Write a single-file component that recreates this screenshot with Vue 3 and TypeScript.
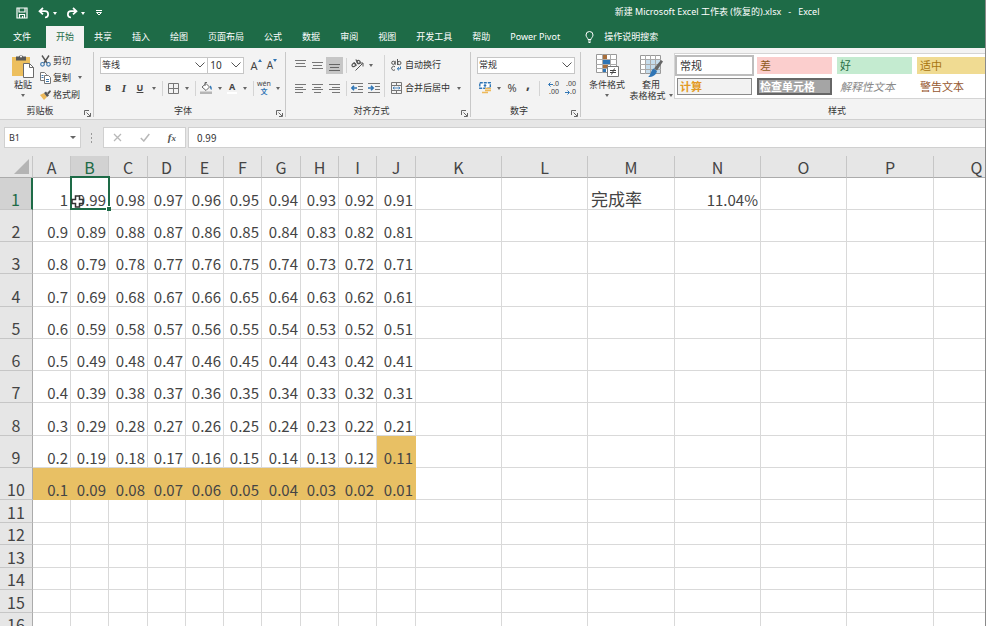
<script setup lang="ts">
import { computed, onBeforeUnmount, onMounted, ref } from 'vue'

interface Column { name: string; size: string }
interface Cell { text: string; kind: string; filled: boolean }

const tabs: string[] = ['共享', '插入', '绘图', '页面布局', '公式', '数据', '审阅', '视图', '开发工具', '帮助', 'Power Pivot']

const dataRows = 10
const dataColumns = 10
const view = ref({ width: window.innerWidth, height: window.innerHeight })

function measure(): void {
  view.value = { width: window.innerWidth, height: window.innerHeight }
}
onMounted(() => window.addEventListener('resize', measure))
onBeforeUnmount(() => window.removeEventListener('resize', measure))

// Only the rows and columns that fit in the window are rendered.
const columns = computed<Column[]>(() => {
  const wide = Math.max(1, Math.ceil((view.value.width - 416) / 86.4))
  return Array.from({ length: Math.min(26, dataColumns + wide) }, (_, i) => {
    const narrow = i < dataColumns
    const extra = narrow ? [2, 6, 9].includes(i) : i % 3 === 0
    return { name: String.fromCharCode(65 + i), size: (narrow ? 'narrow' : 'wide') + (extra ? ' extra' : '') }
  })
})

function cellAt(row: number, col: number, name: string): Cell {
  if (row < dataRows && col < dataColumns) {
    return {
      text: String((100 - row * 10 - col) / 100),
      kind: 'number',
      filled: row === 9 || (row === 8 && col === 9),
    }
  }
  if (row === 0 && name === 'M') return { text: '完成率', kind: 'label', filled: false }
  if (row === 0 && name === 'N') return { text: '11.04%', kind: 'number', filled: false }
  return { text: '', kind: '', filled: false }
}

const rows = computed<Cell[][]>(() => {
  const blank = Math.max(0, Math.ceil((view.value.height - 500) / 22.5))
  return Array.from({ length: dataRows + blank }, (_, r) => columns.value.map((c, i) => cellAt(r, i, c.name)))
})

const active = { row: 0, col: 1 }
const reference = ref('B1')
const formula = ref('0.99')
</script>

<template>
  <div class="app">
    <header class="titlebar">
      <div class="quick">
        <button class="q" aria-label="保存">
          <svg width="12" height="12" viewBox="0 0 12 12" fill="none" stroke="#fff" stroke-width="1.2"><path d="M1 1h10v10H1zM3 1v4h6V1M3.5 11V7.5h5V11M6.5 9v2" /></svg>
        </button>
        <button class="q undo" aria-label="撤消">
          <svg width="12" height="12" viewBox="0 0 12 12" fill="none" stroke="#fff" stroke-width="1.7"><path d="M5 1L1.5 4.2 5 7.4M2 4.2h5a3 3 0 0 1 0 6.3" /></svg>
        </button>
        <i class="caret light"></i>
        <button class="q redo" aria-label="恢复">
          <svg width="12" height="12" viewBox="0 0 12 12" fill="none" stroke="#fff" stroke-width="1.7"><path d="M7 1l3.5 3.2L7 7.4M10 4.2H5a3 3 0 0 0 0 6.3" /></svg>
        </button>
        <i class="caret light"></i>
        <button class="q more" aria-label="自定义">
          <svg width="8" height="6" viewBox="0 0 8 6" fill="none" stroke="#fff"><path d="M1 .5h6M1.5 2.5h5L4 5z" /></svg>
        </button>
      </div>
      <div class="title">新建 Microsoft Excel 工作表 (恢复的).xlsx&nbsp; &nbsp;-&nbsp; &nbsp;Excel</div>
    </header>

    <nav class="tabs">
      <button class="tab file">文件</button>
      <button class="tab current">开始</button>
      <button v-for="t in tabs" :key="t" class="tab">{{ t }}</button>
      <button class="tab tell">
        <svg width="9" height="12" viewBox="0 0 9 12" fill="none" stroke="#fff"><path d="M3 8.5C3 7 1 6 1 4a3.5 3.5 0 0 1 7 0C8 6 6 7 6 8.5zM3 10h3M3.5 11.5h2" /></svg>
        <span>操作说明搜索</span>
      </button>
    </nav>

    <section class="ribbon">
      <div class="group clipboard">
        <div class="body">
          <button class="big paste">
            <svg width="22" height="24" viewBox="0 0 22 24"><path d="M0 3h18v19H0z" fill="#edbf5d" /><path d="M4 2.5h3a2.200 2.200 0 0 1 4 0h3v4H4z" fill="#575757" /><circle cx="9" cy="2.500" r="1" fill="#fff" /><path d="M11.5 9.500h6l4 4v10h-10z" fill="#fff" stroke="#6b6b6b" /><path d="M17.5 9.500v4h4" fill="none" stroke="#6b6b6b" /></svg>
            <span>粘贴</span>
            <i class="caret"></i>
          </button>
          <div class="stack">
            <button class="line">
              <svg width="11" height="12" viewBox="0 0 11 12" fill="none"><path d="M2 .5l5 7.500M9 .5L4 8" stroke="#555" stroke-width="1.400" /><circle cx="2.500" cy="9.300" r="1.800" stroke="#3d77ac" stroke-width="1.200" /><circle cx="8.500" cy="9.300" r="1.800" stroke="#3d77ac" stroke-width="1.200" /></svg>
              <span>剪切</span>
            </button>
            <button class="line">
              <svg width="11" height="12" viewBox="0 0 11 12" fill="#fff" stroke="#777"><path d="M.5.5h4l2 2v6h-6z" /><path d="M4.500 3.500h4l2 2v6h-6z" /><path d="M6 7.500h3M6 9.500h3M1.500 3.500h2M1.500 5.500h2" stroke="#3d77ac" /></svg>
              <span>复制</span>
              <i class="caret"></i>
            </button>
            <button class="line">
              <svg width="11" height="12" viewBox="0 0 11 12"><path d="M0 6l4-2 3 4-3 3z" fill="#edb95a" /><path d="M4 4l2-1.500 3 4L7 8z" fill="#555" /><path d="M7 4l3-3 1 1.500-2.500 3z" fill="#555" /></svg>
              <span>格式刷</span>
            </button>
          </div>
        </div>
        <footer><span>剪贴板</span><svg class="launch" width="7" height="7" viewBox="0 0 7 7" fill="none" stroke="#666"><path d="M.5 5V.5H5M2.500 2.500l3.500 3.500M6.500 3v3.500H3" /></svg></footer>
      </div>

      <div class="group font">
        <div class="rows">
          <div class="row">
            <label class="combo wide-combo">
              <select aria-label="字体"><option>等线</option></select>
              <svg width="10" height="6" viewBox="0 0 10 6" fill="none" stroke="#555"><path d="M.5.5L5 5 9.500.5" /></svg>
            </label>
            <label class="combo size-combo">
              <select aria-label="字号"><option>10</option></select>
              <svg width="10" height="6" viewBox="0 0 10 6" fill="none" stroke="#555"><path d="M.5.5L5 5 9.500.5" /></svg>
            </label>
            <button class="btn grow">A<svg width="4" height="3" viewBox="0 0 4 3" fill="#2f75b5"><path d="M0 3l2-3 2 3z" /></svg></button>
            <button class="btn grow smaller">A<svg width="4" height="3" viewBox="0 0 4 3" fill="#2f75b5"><path d="M0 0l2 3 2-3z" /></svg></button>
          </div>
          <div class="row">
            <button class="btn"><b>B</b></button>
            <button class="btn"><em>I</em></button>
            <button class="btn"><u>U</u></button>
            <span class="drop"><i class="caret"></i></span>
            <i class="sep"></i>
            <button class="btn" aria-label="边框"><svg width="11" height="11" viewBox="0 0 11 11" fill="none" stroke="#777"><path d="M.5.5h10v10H.5zM5.500 0v11M0 5.500h11" /></svg></button>
            <span class="drop"><i class="caret"></i></span>
            <i class="sep"></i>
            <button class="btn" aria-label="填充颜色"><svg width="13" height="12" viewBox="0 0 13 12"><path d="M2 5l4-3.500L9.500 5 6 8.500z" fill="#fff" stroke="#666" /><path d="M5 4V.5h2" fill="none" stroke="#666" /><path d="M10 3.500c2 .5 2 3 1.500 4.500-1.500-1-1.500-2-1.500-4.500z" fill="#2f75b5" /><path d="M0 9.500h12V12H0z" fill="#b5b5b5" /></svg></button>
            <span class="drop"><i class="caret"></i></span>
            <button class="btn slim"><span class="tint">A</span></button>
            <span class="drop"><i class="caret"></i></span>
            <i class="sep"></i>
            <button class="btn pinyin"><small>wén</small><span>文</span></button>
            <span class="drop"><i class="caret"></i></span>
          </div>
        </div>
        <footer><span>字体</span><svg class="launch" width="7" height="7" viewBox="0 0 7 7" fill="none" stroke="#666"><path d="M.5 5V.5H5M2.500 2.500l3.500 3.500M6.500 3v3.500H3" /></svg></footer>
      </div>

      <div class="group align">
        <div class="body">
          <div class="rows">
            <div class="row">
              <button class="btn mid" aria-label="顶端对齐"><svg width="11" height="11" viewBox="0 0 11 11" stroke="#777"><path d="M0 .5h11M1 3.500h9M0 6.500h11" /></svg></button>
              <button class="btn mid" aria-label="垂直居中"><svg width="11" height="11" viewBox="0 0 11 11" stroke="#777"><path d="M0 2.500h11M1 5.500h9M0 8.500h11" /></svg></button>
              <button class="btn mid on" aria-label="底端对齐"><svg width="11" height="11" viewBox="0 0 11 11" stroke="#666"><path d="M0 4.500h11M1 7.500h9M0 10.500h11" /></svg></button>
              <i class="sep"></i>
              <button class="btn" aria-label="方向"><svg width="13" height="12" viewBox="0 0 13 12" fill="none" stroke="#555"><path d="M4.500 11.500l7-7M8.500 4h3.500v3.500" /><ellipse cx="2.800" cy="6" rx="1.900" ry="1.500" transform="rotate(-45 2.800 6)" stroke-width="1.200" /><path d="M2.800 3.500l2.700 3.200" stroke-width="1.200" /><path d="M4.800 .5l2.800 4.500" stroke-width="1.200" /><ellipse cx="7.500" cy="3" rx="1.500" ry="1.700" transform="rotate(-45 7.500 3)" stroke-width="1.200" /></svg></button>
              <span class="drop"><i class="caret"></i></span>
            </div>
            <div class="row">
              <button class="btn mid" aria-label="左对齐"><svg width="11" height="9" viewBox="0 0 11 9" stroke="#777"><path d="M0 .5h11M0 3.500h8M0 5.500h11M0 8.500h8" /></svg></button>
              <button class="btn mid" aria-label="居中"><svg width="11" height="9" viewBox="0 0 11 9" stroke="#777"><path d="M0 .5h11M2 3.500h7M0 5.500h11M2 8.500h7" /></svg></button>
              <button class="btn mid" aria-label="右对齐"><svg width="11" height="9" viewBox="0 0 11 9" stroke="#777"><path d="M0 .5h11M3 3.500h8M0 5.500h11M3 8.500h8" /></svg></button>
              <i class="sep"></i>
              <button class="btn mid" aria-label="减少缩进"><svg width="13" height="11" viewBox="0 0 13 11" fill="none" stroke="#777"><path d="M0 .5h12M7 3.500h5M7 6.500h5M0 9.500h12" /><path d="M6 5H1M3 2.800L.8 5 3 7.200" stroke="#2f75b5" stroke-width="1.600" /></svg></button>
              <button class="btn mid" aria-label="增加缩进"><svg width="13" height="11" viewBox="0 0 13 11" fill="none" stroke="#777"><path d="M0 .5h12M7 3.500h5M7 6.500h5M0 9.500h12" /><path d="M0 5h5M3 2.800L5.200 5 3 7.200" stroke="#2f75b5" stroke-width="1.600" /></svg></button>
            </div>
          </div>
          <i class="divider"></i>
          <div class="rows">
            <button class="row wrap">
              <svg width="11" height="12" viewBox="0 0 11 12" fill="none" stroke="#555"><circle cx="2.300" cy="3.800" r="1.600" /><path d="M4.200 1.800v4M6.500 0v6" /><circle cx="8.300" cy="4" r="1.700" /><path d="M4 7.800a2 2 0 1 0 0 3" /><path d="M9.500 7.500v2.300H6.500M8 8.200L6.300 9.800 8 11.400" stroke="#2f75b5" /></svg>
              <span>自动换行</span>
            </button>
            <button class="row wrap">
              <svg width="11" height="12" viewBox="0 0 11 12" fill="none" stroke="#777"><path d="M.5.5h10v11H.5zM0 3.500h11M0 8.500h11M5.500 0v3.500M5.500 8.500V12" /><path d="M2 6h7M3.500 4.800L2 6l1.500 1.200M7.500 4.800L9 6 7.500 7.200" stroke="#2f75b5" stroke-width=".8" /></svg>
              <span>合并后居中</span>
              <i class="caret"></i>
            </button>
          </div>
        </div>
        <footer><span>对齐方式</span><svg class="launch" width="7" height="7" viewBox="0 0 7 7" fill="none" stroke="#666"><path d="M.5 5V.5H5M2.500 2.500l3.500 3.500M6.500 3v3.500H3" /></svg></footer>
      </div>

      <div class="group number-format">
        <div class="rows">
          <div class="row">
            <label class="combo format-combo">
              <select aria-label="数字格式"><option>常规</option></select>
              <svg width="10" height="6" viewBox="0 0 10 6" fill="none" stroke="#555"><path d="M.5.5L5 5 9.500.5" /></svg>
            </label>
          </div>
          <div class="row">
            <button class="btn" aria-label="会计数字格式"><svg width="13" height="12" viewBox="0 0 13 12" fill="none"><path d="M.8.8h10.500v5.400H.8z" fill="#fff" stroke="#2f75b5" stroke-width="1.400" stroke-dasharray="3 1" /><circle cx="6" cy="3.500" r="1.300" fill="#2f75b5" /><path d="M6 6.500h6M6 8.500h6M3 10.500h6" stroke="#edb95a" stroke-width="1.600" /></svg></button>
            <span class="drop"><i class="caret"></i></span>
            <button class="btn sign">%</button>
            <button class="btn comma">,</button>
            <i class="sep"></i>
            <button class="btn mid decimals"><span><svg width="5" height="5" viewBox="0 0 5 5" fill="none" stroke="#2f75b5"><path d="M5 2.500H1M2.500.5l-2 2 2 2" /></svg>.0</span><span>.00</span></button>
            <button class="btn mid decimals"><span>.00</span><span><svg width="5" height="5" viewBox="0 0 5 5" fill="none" stroke="#2f75b5"><path d="M0 2.500h4M2.500.5l2 2-2 2" /></svg>.0</span></button>
          </div>
        </div>
        <footer><span>数字</span><svg class="launch" width="7" height="7" viewBox="0 0 7 7" fill="none" stroke="#666"><path d="M.5 5V.5H5M2.500 2.500l3.500 3.500M6.500 3v3.500H3" /></svg></footer>
      </div>

      <div class="group styles">
        <div class="body">
          <button class="big conditional">
            <svg width="23" height="24" viewBox="0 0 23 24" fill="none"><path d="M.5.5h20v18H.5z" fill="#fff" stroke="#999" /><path d="M0 5.500h21M0 10.500h21M0 14.500h21M6.500 0v19M14.500 0v19" stroke="#aaa" /><path d="M7 1h4v4H7z" fill="#a86f3c" /><path d="M7 6h7v4H7z" fill="#2f75b5" /><path d="M7 11h5v3H7z" fill="#a86f3c" /><path d="M7 15h3v3H7z" fill="#2f75b5" /><path d="M11.500 12.500h11v10h-11z" fill="#fff" stroke="#777" /><path d="M14 16.500h6M14 18.500h6M18.500 14.500l-3 6" stroke="#444" /></svg>
            <span>条件格式</span>
            <i class="caret"></i>
          </button>
          <button class="big table-style">
            <svg width="23" height="24" viewBox="0 0 23 24" fill="none"><path d="M.5 1.500h20v18H.5z" fill="#fff" stroke="#999" /><path d="M6 6h14v13H6z" fill="#c5dcec" /><path d="M0 5.500h21M0 10.500h21M0 15.500h21M5.500 1v19M10.500 1v19M15.500 1v19" stroke="#aaa" /><path d="M21 6l2 1.500-6 9-3-2z" fill="#666" /><path d="M13.500 14.500l3.500 2.500c-1 4-4 6-9 6 3-2 2.500-6 5.500-8.500z" fill="#2f75b5" /></svg>
            <span>套用</span>
            <span class="second">表格格式<i class="caret"></i></span>
          </button>
          <div class="gallery">
            <button class="style normal">常规</button>
            <button class="style bad">差</button>
            <button class="style good">好</button>
            <button class="style neutral">适中</button>
            <button class="style calc">计算</button>
            <button class="style check">检查单元格</button>
            <button class="style explain">解释性文本</button>
            <button class="style warn">警告文本</button>
          </div>
        </div>
        <footer class="plain"><span>样式</span></footer>
      </div>
    </section>

    <section class="formula-bar">
      <label class="name-box">
        <input v-model="reference" aria-label="名称框" />
        <i class="caret"></i>
      </label>
      <svg class="grip" width="2" height="10" viewBox="0 0 2 10" fill="#999"><path d="M0 0h1v2H0zM0 4h1v2H0zM0 8h1v2H0z" /></svg>
      <div class="actions">
        <button aria-label="取消"><svg width="9" height="9" viewBox="0 0 9 9" fill="none" stroke="#b8b8b8" stroke-width="1.300"><path d="M1 1l7 7M8 1L1 8" /></svg></button>
        <button aria-label="输入"><svg width="10" height="9" viewBox="0 0 10 9" fill="none" stroke="#b8b8b8" stroke-width="1.500"><path d="M.8 5l3 3L9.300 1" /></svg></button>
        <button class="fx"><em>f<small>x</small></em></button>
      </div>
      <input v-model="formula" class="formula" aria-label="编辑栏" />
    </section>

    <main class="sheet">
      <table>
        <colgroup>
          <col class="index" />
          <col v-for="c in columns" :key="c.name" :class="c.size" />
        </colgroup>
        <thead>
          <tr>
            <th class="corner"><svg width="15" height="15" viewBox="0 0 15 15" fill="#b4b4b4"><path d="M15 0v15H0z" /></svg></th>
            <th v-for="(c, i) in columns" :key="c.name" :class="{ selected: i === active.col }">{{ c.name }}</th>
          </tr>
        </thead>
        <tbody>
          <tr v-for="(cells, r) in rows" :key="r" :class="r < dataRows ? 'tall' : 'short'">
            <th :class="{ selected: r === active.row }">{{ r + 1 }}</th>
            <td v-for="(cell, c) in cells" :key="c" :class="[cell.kind, { filled: cell.filled, active: r === active.row && c === active.col }]">
              {{ cell.text }}
              <template v-if="r === active.row && c === active.col">
                <i class="outline"></i>
                <svg class="pointer" width="13" height="13" viewBox="0 0 13 13"><path d="M4.500 1h4v3.500H12v4H8.500V12h-4V8.500H1v-4h3.500z" fill="#fff" stroke="#333" stroke-width="1.500" /></svg>
              </template>
            </td>
          </tr>
        </tbody>
      </table>
    </main>
  </div>
</template>

<style>
body {
  background: #fff;
  overflow: hidden;
}
</style>

<style scoped>
.app {
  display: flex;
  flex-direction: column;
  height: 100vh;
  overflow: hidden;
  border-right: 1px solid #8a8a8a;
  box-sizing: border-box;
  background: #e6e6e6;
  color: #333;
  font-family: "Noto Sans", "Noto Sans CJK SC", sans-serif;
  font-size: 9px;
  line-height: 12px;
}
button, input, select {
  font: inherit;
  color: inherit;
  background: none;
  border: 0;
  padding: 0;
  margin: 0;
  outline: none;
  white-space: nowrap;
}
svg { display: block; flex: none; }
.caret {
  flex: none;
  width: 0;
  height: 0;
  border: 2px solid transparent;
  border-top: 3px solid #666;
  border-bottom: 0;
}
.caret.light { border-top-color: #fff; }

.titlebar {
  display: grid;
  grid-template-columns: 62% 1fr;
  align-items: center;
  flex: none;
  height: 26px;
  background: #1e6b47;
  color: #fff;
}
.quick { display: flex; align-items: center; padding-left: 16px; }
.undo { margin-left: 10px; margin-right: 3px; }
.redo { margin-left: 9px; margin-right: 3px; }
.more { margin-left: 10px; }
.title { padding-left: 4px; padding-bottom: 3px; white-space: nowrap; }

.tabs {
  display: flex;
  align-items: stretch;
  flex: none;
  height: 22px;
  background: #1e6b47;
  color: #fff;
}
.tab { padding: 0 10px; }
.file { padding: 0 15px 0 13px; }
.current { background: #f3f3f3; color: #1e6b47; }
.tell { display: flex; align-items: center; gap: 10px; padding-left: 15px; }

.ribbon {
  display: flex;
  flex: none;
  height: 71px;
  background: #f3f3f3;
  border-bottom: 1px solid #d0d0d0;
  overflow: hidden;
}
.group {
  display: flex;
  flex-direction: column;
  flex: none;
  box-sizing: border-box;
  margin: 4px 0 2px;
  padding: 0 5px 0 6px;
  border-right: 1px solid #c8c8c8;
}
.clipboard { width: 94px; }
.font { width: 192px; }
.align { width: 185px; }
.number-format { width: 110px; }
.styles { width: 512px; padding-left: 5px; padding-right: 0; border-right: 0; }
.body { display: flex; height: 51px; }
.rows { display: flex; flex-direction: column; gap: 3px; height: 51px; padding-top: 3px; box-sizing: border-box; }
.row { display: flex; align-items: center; height: 20px; }
footer {
  display: flex;
  justify-content: center;
  align-items: center;
  position: relative;
  height: 12px;
  padding-top: 2px;
  padding-right: 14px;
}
.plain { padding-right: 5px; }
.launch { position: absolute; right: -3px; bottom: 0; }

.big { display: flex; flex-direction: column; align-items: center; padding-top: 2px; line-height: 11px; }
.big span { margin-top: 1px; }
.big .caret { margin-top: 4px; }
.paste { width: 34px; }
.stack { display: flex; flex-direction: column; }
.line { display: flex; align-items: center; gap: 2px; height: 17px; }
.line .caret { margin-left: 5px; }

.combo {
  display: grid;
  align-items: center;
  box-sizing: border-box;
  height: 17px;
  background: #fff;
  border: 1px solid #c6c6c6;
}
.combo select { grid-area: 1 / 1; appearance: none; width: 100%; padding-left: 1px; }
.combo svg { grid-area: 1 / 1; justify-self: end; margin-right: 2px; pointer-events: none; }
.wide-combo { width: 112px; }
.size-combo { width: 37px; border-left: 0; }
.size-combo select { padding-left: 2px; font-size: 10px; }
.format-combo { width: 98px; }

.btn {
  display: flex;
  align-items: center;
  justify-content: center;
  flex: none;
  width: 16px;
  height: 17px;
  color: #444;
}
.mid { width: 17px; }
.slim { width: 14px; }
.on { background: #c6c6c6; }
.btn em { font-family: "Liberation Serif", serif; font-size: 11px; font-weight: bold; }
.btn u { font-weight: bold; }
.grow { align-items: flex-start; margin-left: 2px; font-size: 11px; line-height: 17px; }
.size-combo + .grow { margin-left: 4px; }
.smaller { margin-left: 0; font-size: 10px; }
.grow svg { margin-top: 2px; }
.tint { font-weight: bold; line-height: 10px; border-bottom: 2px solid #fff; padding: 0 2px; }
.pinyin { flex-direction: column; }
.pinyin small { font-size: 7px; line-height: 8px; }
.pinyin span { color: #2f75b5; font-weight: bold; font-size: 7px; line-height: 8px; }
.sign { font-size: 11px; }
.comma { font-size: 14px; font-weight: bold; line-height: 8px; align-items: flex-start; }
.decimals { flex-direction: column; align-items: flex-end; font-size: 7px; line-height: 8px; }
.decimals span { display: flex; align-items: center; height: 8px; }
.drop { display: flex; justify-content: center; flex: none; width: 11px; }
.sep { flex: none; width: 1px; height: 15px; margin: 0 2px 0 3px; background: #d4d4d4; }
.divider { flex: none; width: 1px; height: 42px; margin: 3px 6px 0 1px; background: #d4d4d4; }
.wrap { gap: 3px; }
.wrap .caret { margin-left: 4px; }

.conditional { width: 42px; }
.table-style { width: 46px; }
.big .second { display: flex; align-items: center; gap: 3px; margin: 0; }
.second .caret { margin: 0; }
.gallery {
  display: grid;
  grid-template-columns: repeat(4, 75px);
  grid-auto-rows: 17px;
  gap: 4px 5px;
  flex: 1;
  box-sizing: border-box;
  height: 46px;
  margin-top: 1px;
  padding: 3px 2px;
  background: #fff;
  border: 1px solid #d4d4d4;
}
.style { display: flex; align-items: center; padding-left: 3px; font-size: 11px; box-sizing: border-box; }
.normal { outline: 2px solid #bdbdbd; }
.bad { background: #fbcecd; color: #8f5b22; }
.good { background: #c4ebd0; color: #2a7048; }
.neutral { background: #f0db92; color: #a8740f; }
.calc { background: #f2f2f2; border: 1px solid #8a8a8a; color: #e39a24; font-weight: bold; padding-left: 2px; }
.check { background: #a5a5a5; border: 2px solid #666; color: #fff; font-weight: bold; padding-left: 1px; }
.explain { color: #8a8a8a; font-style: italic; }
.warn { color: #96572f; }

.formula-bar {
  display: flex;
  align-items: center;
  flex: none;
  box-sizing: border-box;
  height: 36px;
  padding: 7px 0 8px 4px;
}
.name-box {
  display: flex;
  align-items: center;
  box-sizing: border-box;
  width: 77px;
  height: 21px;
  padding: 0 4px;
  background: #fff;
  border: 1px solid #d0d0d0;
}
.name-box input { flex: 1; min-width: 0; }
.name-box .caret { border-width: 3px 3px 0; }
.grip { margin: 0 10px; }
.actions {
  display: flex;
  align-items: center;
  justify-content: space-around;
  box-sizing: border-box;
  width: 83px;
  height: 21px;
  background: #fff;
  border: 1px solid #d0d0d0;
}
.fx em { font-family: "Liberation Serif", serif; font-size: 11px; font-weight: bold; color: #555; }
.fx small { font-size: 9px; }
.formula {
  flex: 1;
  min-width: 0;
  box-sizing: border-box;
  height: 21px;
  margin-left: 2px;
  padding-left: 8px;
  background: #fff;
  border: 1px solid #d0d0d0;
  border-right: 0;
  font-family: "Noto Sans CJK SC", sans-serif;
  font-size: 10px;
}

.sheet { flex: 1; min-height: 0; overflow: hidden; background: #fff; font-family: "Noto Sans CJK SC", sans-serif; }
table { table-layout: fixed; width: 1px; border-collapse: separate; border-spacing: 0; }
col.index { width: 33px; }
col.narrow { width: 38px; }
col.narrow.extra { width: 39px; }
col.wide { width: 86px; }
col.wide.extra { width: 87px; }
th, td { box-sizing: border-box; padding: 0; white-space: nowrap; line-height: 20px; }
th { background: #e6e6e6; font-size: 16px; font-weight: 400; color: #444; text-align: center; }
thead th { height: 22px; border-right: 1px solid #c6c6c6; border-bottom: 1px solid #ababab; }
tbody th { border-right: 1px solid #ababab; border-bottom: 1px solid #c6c6c6; vertical-align: bottom; }
th.selected { background: #d2d2d2; color: #1e6b47; }
tbody th.selected { border-right: 2px solid #1e6b47; }
.corner svg { margin-left: 14px; }
.tall th, .tall td { height: 32px; }
.tall:nth-child(4n) th, .tall:nth-child(4n) td { height: 33px; }
.short th, .short td { height: 22px; }
.short:nth-child(odd) th, .short:nth-child(odd) td { height: 23px; }
td {
  border-right: 1px solid #d9d9d9;
  border-bottom: 1px solid #d9d9d9;
  vertical-align: bottom;
  color: #444;
  font-size: 15px;
  line-height: 18px;
}
.number { text-align: right; padding-right: 2px; }
.label { padding-left: 3px; font-size: 17px; line-height: 20px; }
td.filled { background: #e8c064; border-color: #e8c064; }
td.active { position: relative; }
.outline { position: absolute; inset: -2px -2px -1px -1px; border: 2px solid #1e6b47; }
.outline::after {
  content: "";
  position: absolute;
  right: -3px;
  bottom: -3px;
  width: 4px;
  height: 4px;
  background: #1e6b47;
  border: 1px solid #fff;
  border-right: 0;
  border-bottom: 0;
}
.pointer { position: absolute; left: 0; bottom: 1px; }
</style>
